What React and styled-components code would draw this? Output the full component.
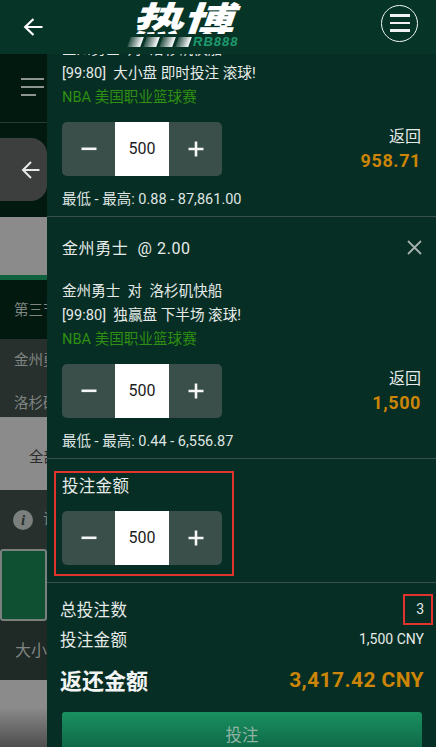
import React from 'react'
import styled, { createGlobalStyle } from 'styled-components'

const FONT = `Roboto, "Noto Sans CJK SC", sans-serif`

const GlobalStyle = createGlobalStyle`
  html, body { margin: 0; padding: 0; background: #062e24; }
  * { box-sizing: border-box; }
`

const bets = [
  {
    id: 1,
    title: '金州勇士  @ 1.92',
    teams: '金州勇士  对  洛杉矶快船',
    market: '[99:80]  大小盘 即时投注 滚球!',
    limits: '最低 - 最高: 0.88 - 87,861.00',
    back: '958.71'
  },
  {
    id: 2,
    title: '金州勇士  @ 2.00',
    teams: '金州勇士  对  洛杉矶快船',
    market: '[99:80]  独赢盘 下半场 滚球!',
    limits: '最低 - 最高: 0.44 - 6,556.87',
    back: '1,500'
  }
]

const stripes = [0, 1, 2, 3]

function App() {
  return (
    <Page>
      <GlobalStyle />
      <Header>
        <svg width="20" height="20" viewBox="0 0 20 20" fill="none" stroke="#fff" strokeWidth="2.2">
          <path d="M19.5 10H2M10.500 2 2.200 10l8.300 8" />
        </svg>
        <Logo>
          <LogoClip>
            <LogoMark>热博</LogoMark>
          </LogoClip>
          <LogoBottom>
            {stripes.map(i => (
              <LogoStripe key={i} />
            ))}
            <LogoBrand>RB888</LogoBrand>
          </LogoBottom>
        </Logo>
        <MenuButton>
          <MenuLine />
          <MenuLine />
          <MenuLine />
        </MenuButton>
      </Header>

      <Body>
        <Backdrop>
          <BackRow $height={69} $bg="#02190f" $border>
            <BurgerIcon>
              <span /><span /><span />
            </BurgerIcon>
          </BackRow>
          <BackRow $height={94} $bg="#02190f">
            <BackPill>
              <svg width="19" height="20" viewBox="0 0 19 20" fill="none" stroke="#e8e8e8" strokeWidth="2">
                <path d="M18.500 10H2M10 2 2 10l8 8" />
              </svg>
            </BackPill>
          </BackRow>
          <BackRow $height={58} $bg="#8b8b8b" />
          <BackRow $height={5} $bg="#10623f" />
          <BackRow $height={59} $bg="#02190f" $pad={3}>
            <BackText $left={14}>第三节</BackText>
          </BackRow>
          <BackRow $height={78} $bg="#27302c" $pad={8} $column>
            <BackText $left={14}>金州勇士</BackText>
            <BackText $left={14}>洛杉矶快船</BackText>
          </BackRow>
          <BackRow $height={73} $bg="#8b8b8b" $pad={9}>
            <BackText $left={29} $dark>全部</BackText>
          </BackRow>
          <BackRow $height={59} $bg="#27302c">
            <InfoDot>i</InfoDot>
            <BackText $left={10}>详情</BackText>
          </BackRow>
          <GreenCard />
          <BackRow $height={59} $bg="#1f2925">
            <BackText $left={15} $size={16}>大小盘</BackText>
          </BackRow>
          <FadeRow />
        </Backdrop>

        <Panel>
          <BetList>
            {bets.map(bet => (
              <BetRow key={bet.id}>
                <BetTitleRow>
                  <BetTitle>{bet.title}</BetTitle>
                  <svg width="15" height="15" viewBox="0 0 15 15" stroke="#a4b0ab" strokeWidth="1.8">
                    <path d="M1 1l13 13M14 1 1 14" />
                  </svg>
                </BetTitleRow>
                <BetLine>{bet.teams}</BetLine>
                <BetLine>{bet.market}</BetLine>
                <LeagueLine>NBA 美国职业篮球赛</LeagueLine>
                <StakeRow>
                  <Stepper />
                  <ReturnBox>
                    <ReturnLabel>返回</ReturnLabel>
                    <ReturnValue>{bet.back}</ReturnValue>
                  </ReturnBox>
                </StakeRow>
                <Limits>{bet.limits}</Limits>
              </BetRow>
            ))}
          </BetList>

          <StakeSection>
            <Highlight>
              <StakeLabel>投注金额</StakeLabel>
              <Stepper />
            </Highlight>
          </StakeSection>

          <Summary>
            <SummaryRow>
              <SummaryLabel>总投注数</SummaryLabel>
              <CountBox>3</CountBox>
            </SummaryRow>
            <SummaryRow>
              <SummaryLabel>投注金额</SummaryLabel>
              <SummaryValue>1,500 CNY</SummaryValue>
            </SummaryRow>
            <TotalRow>
              <TotalLabel>返还金额</TotalLabel>
              <TotalValue>3,417.42 CNY</TotalValue>
            </TotalRow>
            <SubmitButton>投注</SubmitButton>
          </Summary>
        </Panel>
      </Body>
    </Page>
  )
}

const Stepper = () => (
  <StepperBox>
    <StepButton>
      <svg width="16" height="16" viewBox="0 0 16 16" fill="#f4f6f5"><rect x="0.5" y="6.5" width="15" height="2.6" /></svg>
    </StepButton>
    <StepValue>500</StepValue>
    <StepButton>
      <svg width="16" height="16" viewBox="0 0 16 16" fill="#f4f6f5"><path d="M6.7.5h2.6v6.2h6.2v2.6H9.300v6.200H6.700V9.300H.5V6.700h6.200z" /></svg>
    </StepButton>
  </StepperBox>
)

export default App

const Page = styled.div`
  width: 436px;
  height: 747px;
  overflow: hidden;
  font-family: ${FONT};
  color: #e6ebe9;
  background: #062e24;
`

const Header = styled.header`
  height: 54px;
  padding: 0 18px 0 23px;
  display: flex;
  align-items: center;
  justify-content: space-between;
  background: #063528;
  position: relative;
  z-index: 2;
`

const Logo = styled.div`
  position: absolute;
  left: 126px;
  top: 2px;
  width: 118px;
  height: 45px;
`

const LogoClip = styled.div`
  height: 32px;
  padding-left: 17px;
  overflow: hidden;
`

const LogoMark = styled.div`
  font: 900 51px/51px "Noto Sans CJK SC", sans-serif;
  color: #fff;
  white-space: nowrap;
  transform-origin: 0 0;
  transform: translateY(-3px) scaleY(0.8) skewX(-16deg);
`

const LogoBottom = styled.div`
  height: 11px;
  margin-top: 2px;
  padding-left: 3px;
  display: flex;
  align-items: center;
  gap: 3px;
`

const LogoStripe = styled.span`
  width: 13px;
  height: 10px;
  flex: none;
  transform: skewX(-20deg);
  background: linear-gradient(90deg, rgba(255, 255, 255, 0.15), #fff);
`

const LogoBrand = styled.span`
  font: italic 700 13px/11px "Liberation Sans", sans-serif;
  color: #1f9a6d;
  letter-spacing: 1px;
`

const MenuButton = styled.div`
  width: 37px;
  height: 37px;
  margin-top: -8px;
  border: 1.5px solid #f1f4f3;
  border-radius: 50%;
  display: flex;
  flex-direction: column;
  align-items: center;
  justify-content: center;
  gap: 5px;
`

const MenuLine = styled.span`
  width: 20px;
  height: 2.5px;
  background: #f1f4f3;
`

const Body = styled.div`
  height: 693px;
  display: flex;
  overflow: hidden;
`

const Backdrop = styled.aside`
  width: 47px;
  flex: none;
  display: flex;
  flex-direction: column;
  overflow: hidden;
`

const BackRow = styled.div`
  height: ${props => props.$height}px;
  flex: none;
  padding-top: ${props => props.$pad || 0}px;
  background: ${props => props.$bg};
  border-bottom: ${props => (props.$border ? '1px solid #2a3a34' : 'none')};
  display: flex;
  flex-direction: ${props => (props.$column ? 'column' : 'row')};
  align-items: ${props => (props.$column ? 'flex-start' : 'center')};
  justify-content: ${props => (props.$column ? 'center' : 'flex-start')};
  gap: ${props => (props.$column ? '21px' : '0')};
  white-space: nowrap;
`

const BurgerIcon = styled.div`
  margin-left: 21px;
  margin-top: -2px;
  display: flex;
  flex-direction: column;
  gap: 6px;

  span {
    display: block;
    width: 23px;
    height: 2px;
    background: #8d9491;
  }

  span:last-child {
    width: 15px;
  }
`

const BackPill = styled.div`
  width: 47px;
  height: 63px;
  margin-top: -1px;
  padding-left: 21px;
  display: flex;
  align-items: center;
  background: #3d3f3f;
  border-radius: 0 16px 16px 0;
`

const BackText = styled.span`
  margin-left: ${props => props.$left}px;
  font-size: ${props => props.$size || 14.5}px;
  line-height: 22px;
  color: ${props => (props.$dark ? '#2a2a2a' : '#7f8582')};
`

const InfoDot = styled.span`
  width: 20px;
  height: 20px;
  flex: none;
  margin-left: 13px;
  border-radius: 50%;
  background: #7b7f7d;
  color: #27302c;
  font: italic 700 15px/20px "Liberation Serif", serif;
  text-align: center;
`

const GreenCard = styled.div`
  height: 72px;
  flex: none;
  background: #0f4f32;
  border: 2px solid #7b7f7d;
  border-radius: 3px;
`

const FadeRow = styled.div`
  height: 67px;
  flex: none;
  background: linear-gradient(#8b8b8b 40%, #4e4e4e);
`

const Panel = styled.main`
  flex: 1;
  min-width: 0;
  background: #062e24;
  overflow: hidden;
`

const BetList = styled.div`
  margin-top: -79px;
`

const BetRow = styled.section`
  height: 242px;
  padding: 0 15px;
  border-bottom: 1px solid #3a5149;
`

const BetTitleRow = styled.div`
  height: 62px;
  margin-right: -1px;
  padding-bottom: 2px;
  display: flex;
  align-items: center;
  justify-content: space-between;
`

const BetTitle = styled.div`
  font-size: 16px;
  letter-spacing: 0.6px;
  white-space: pre;
  color: #e6ebe9;
`

const BetLine = styled.div`
  height: 24px;
  font-size: 14.600px;
  line-height: 24px;
  white-space: pre;
  color: #e6ebe9;
`

const LeagueLine = styled(BetLine)`
  color: #2e8f12;
`

const StakeRow = styled.div`
  height: 54px;
  margin-top: 13px;
  display: flex;
  align-items: center;
  justify-content: space-between;
`

const StepperBox = styled.div`
  width: 160px;
  height: 54px;
  display: flex;
  border-radius: 5px;
  overflow: hidden;
  background: #3a4f49;
`

const StepButton = styled.div`
  flex: 1;
  display: flex;
  align-items: center;
  justify-content: center;
`

const StepValue = styled.div`
  width: 54px;
  background: #fff;
  color: #1c1c1c;
  font-size: 16px;
  line-height: 54px;
  text-align: center;
`

const ReturnBox = styled.div`
  text-align: right;
`

const ReturnLabel = styled.div`
  font-size: 16px;
  line-height: 24px;
  color: #e6ebe9;
`

const ReturnValue = styled.div`
  font-size: 18px;
  font-weight: 700;
  line-height: 24px;
  letter-spacing: 0.6px;
  color: #cc8506;
`

const Limits = styled.div`
  margin-top: 14px;
  font-size: 14.500px;
  line-height: 20px;
  white-space: nowrap;
  color: #dfe5e3;
`

const StakeSection = styled.section`
  height: 124px;
  padding: 12px 0 0 7px;
  border-bottom: 1px solid #3a5149;
`

const Highlight = styled.div`
  width: 180px;
  height: 105px;
  padding: 0 6px;
  border: 2px solid #e2332f;
`

const StakeLabel = styled.div`
  height: 38px;
  font-size: 16.500px;
  line-height: 28px;
  letter-spacing: 0.3px;
  color: #e6ebe9;
`

const Summary = styled.section`
  padding: 11px 12px 0 13px;
`

const SummaryRow = styled.div`
  height: 30px;
  display: flex;
  align-items: center;
  justify-content: space-between;
`

const SummaryLabel = styled.span`
  font-size: 16.500px;
  letter-spacing: 0.3px;
  color: #e6ebe9;
`

const SummaryValue = styled.span`
  font-size: 14px;
  color: #e6ebe9;
`

const CountBox = styled.span`
  width: 30px;
  height: 31px;
  margin-right: -9px;
  padding-right: 7px;
  border: 2px solid #e2332f;
  font-size: 14px;
  line-height: 27px;
  text-align: right;
`

const TotalRow = styled(SummaryRow)`
  height: 40px;
  margin-top: 5px;
`

const TotalLabel = styled.span`
  font-size: 22px;
  font-weight: 700;
  margin-top: -1px;
  color: #f3f5f4;
`

const TotalValue = styled.span`
  font-size: 21px;
  font-weight: 700;
  margin-top: 2px;
  letter-spacing: 0.4px;
  color: #cc8506;
`

const SubmitButton = styled.div`
  height: 50px;
  margin: 13px 2px 0 2px;
  border-radius: 3px;
  background: linear-gradient(#1a9060, #0a5a3e);
  font-size: 16.500px;
  line-height: 48px;
  text-align: center;
  color: #8fb3a4;
`
